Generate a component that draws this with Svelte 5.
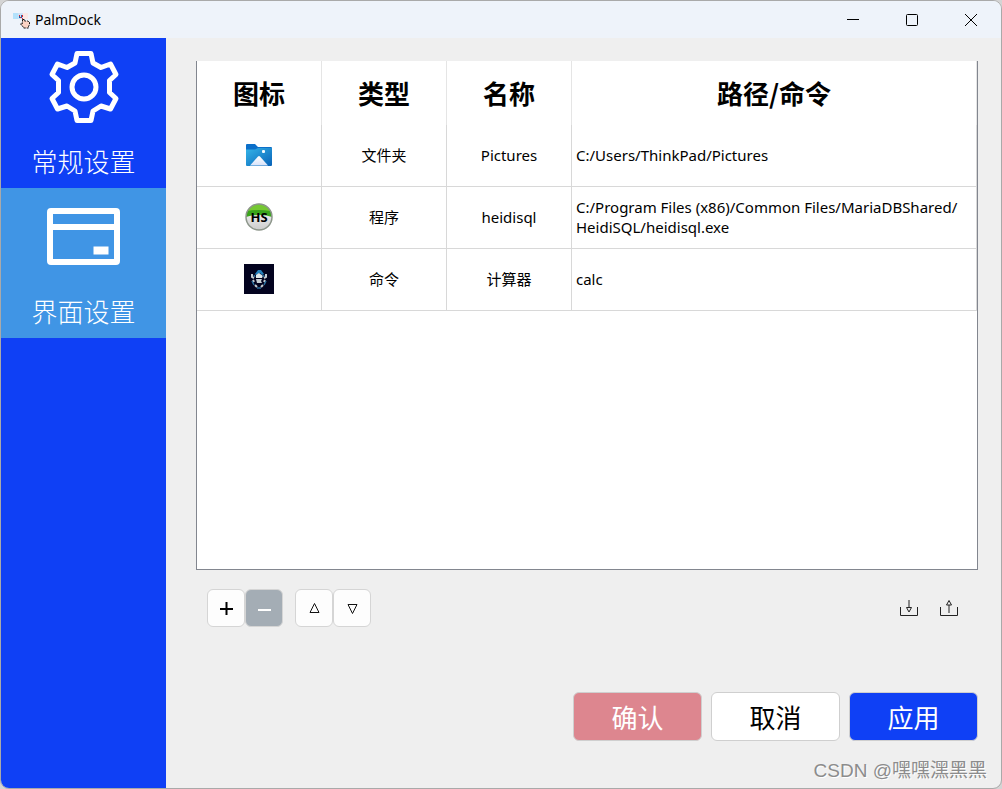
<script lang="ts">
  interface Entry {
    icon: 'pictures' | 'heidi' | 'command';
    type: string;
    name: string;
    path: string[];
  }

  const entries: Entry[] = [
    { icon: 'pictures', type: '文件夹', name: 'Pictures', path: ['C:/Users/ThinkPad/Pictures'] },
    {
      icon: 'heidi',
      type: '程序',
      name: 'heidisql',
      path: ['C:/Program Files (x86)/Common Files/MariaDBShared/', 'HeidiSQL/heidisql.exe']
    },
    { icon: 'command', type: '命令', name: '计算器', path: ['calc'] }
  ];

  let page = $state('interface');
</script>

<div class="window">
  <header class="titlebar">
    <svg class="titlebar__logo" width="18" height="18" viewBox="0 0 18 18" aria-hidden="true">
      <path d="M1 1h5v6H1z" fill="#b3e1fb" />
      <path d="M6 1h5v6H6z" fill="#cfe2f5" />
      <path d="M11 1h5v6h-5z" fill="#fae8e6" />
      <path d="M7 4h1v2H7zM9 3h1v3H9z" fill="#2360a8" />
      <path d="M7 3h1v1H7zM10 3h1v2h-1zM8 5h1v1H8zM10 6h1v1h-1z" fill="#e8232b" />
      <path d="M10.500 7.500v4l-1.500-.5v2l2.500 2v1h5v-2l1-1v-3l-2-1h-3v-1.500z" fill="#fbd3c4" stroke="#111" stroke-dasharray="2 1" />
    </svg>
    <span class="titlebar__title">PalmDock</span>
    <div class="titlebar__controls">
      <button type="button" aria-label="最小化">
        <svg width="14" height="14" viewBox="0 0 14 14"><path d="M1 6.500h12" /></svg>
      </button>
      <button type="button" aria-label="最大化">
        <svg width="14" height="14" viewBox="0 0 14 14"><rect x="1.500" y="1.500" width="11" height="11" rx="1" /></svg>
      </button>
      <button type="button" aria-label="关闭">
        <svg width="14" height="14" viewBox="0 0 14 14"><path d="M1 1l12 12M13 1L1 13" /></svg>
      </button>
    </div>
  </header>

  <div class="body">
    <nav class="sidebar">
      <button
        type="button"
        class="sidebar__item"
        class:sidebar__item--active={page === 'general'}
        onclick={() => (page = 'general')}
      >
        <svg width="74" height="74" viewBox="0 0 74 74" fill="none" stroke="#fff" stroke-width="5" stroke-linejoin="round">
          <path d="M30 3.500h14l2 9.500 8 4.500 9.500-3.500 5.500 10.500-6.500 6v12l6.500 6L63.500 59 54 56l-8 5-2 9.500H30L28 61l-8-5-9.500 3L5 48.500l6.500-6v-12l-6.500-6L10.500 14l9.500 3.500 8-4.500z" />
          <circle cx="37" cy="37" r="12" />
        </svg>
        <span>常规设置</span>
      </button>
      <button
        type="button"
        class="sidebar__item"
        class:sidebar__item--active={page === 'interface'}
        onclick={() => (page = 'interface')}
      >
        <svg width="74" height="74" viewBox="0 0 74 74" fill="none" stroke="#fff" stroke-width="6">
          <rect x="3" y="11" width="67" height="51" rx="1" />
          <path d="M3 27h67" />
          <path d="M46.500 50.500h15" stroke-width="8" />
        </svg>
        <span>界面设置</span>
      </button>
    </nav>

    <main class="content">
      <div class="panel">
        <table>
          <thead>
            <tr>
              <th class="narrow">图标</th>
              <th class="narrow">类型</th>
              <th class="narrow">名称</th>
              <th>路径/命令</th>
            </tr>
          </thead>
          <tbody>
            {#each entries as entry}
              <tr>
                <td>
                  {#if entry.icon === 'pictures'}
                    <svg width="30" height="30" viewBox="0 0 30 30" role="img" aria-label={entry.name}>
                      <defs>
                        <linearGradient id="folder" x1="0" y1="0" x2="1" y2="1">
                          <stop offset="0" stop-color="#35b5e8" />
                          <stop offset="1" stop-color="#0862b8" />
                        </linearGradient>
                        <linearGradient id="peak" x1="0" y1="0" x2="0" y2="1">
                          <stop offset="0" stop-color="#fff" />
                          <stop offset="1" stop-color="#d8e3fa" />
                        </linearGradient>
                      </defs>
                      <path d="M2 5q0-1 1-1h8l3 3h13q1 0 1 1v4H2z" fill="#0c6fc9" />
                      <path d="M2 9.500h9l3-1.500h14v17q0 1-1 1H3q-1 0-1-1z" fill="url(#folder)" />
                      <path d="M6 25.500l8-9q1-1 2 0l8 9z" fill="url(#peak)" />
                      <rect x="18" y="10" width="3" height="3" rx="1" fill="#eff9ff" />
                    </svg>
                  {:else if entry.icon === 'heidi'}
                    <svg width="30" height="30" viewBox="0 0 30 30" role="img" aria-label={entry.name}>
                      <defs>
                        <linearGradient id="silver" x1="0" y1="0" x2="0" y2="1">
                          <stop offset="0" stop-color="#fff" />
                          <stop offset="1" stop-color="#ccc" />
                        </linearGradient>
                      </defs>
                      <circle cx="15" cy="15" r="13" fill="url(#silver)" />
                      <path d="M2 15a13 13 0 0 1 26 0q-5-2-13-2T2 15z" fill="#3aa51b" />
                      <path d="M4 9a12 12 0 0 1 22 0q-11-2-22 0z" fill="#75c832" />
                      <circle cx="15" cy="15" r="13" fill="none" stroke="#8d968b" stroke-width="1.500" />
                      <text x="15" y="20" text-anchor="middle" class="badge">HS</text>
                    </svg>
                  {:else}
                    <svg width="30" height="30" viewBox="0 0 30 30" role="img" aria-label={entry.name}>
                      <path d="M0 0h30v30H0z" fill="#03031f" />
                      <path d="M11 10l3-4h3l3 4-2 1-2-2-4 2z" fill="#2380bd" />
                      <path d="M8 10v3l2 1M22 10v3l-2 1M9 16l1 2M21 16l-1 2M11 21l2 2M19 21l-2 2" fill="none" stroke="#c3cbd1" stroke-width="2" />
                      <path d="M12 11l3-2 4 3-1 2h-6z" fill="#dfe8ed" />
                      <path d="M12 15h6l-1 2 1 2h-5z" fill="#c6cdd3" />
                      <path d="M10 11l1 2M20 11l-1 2M8 17l2 4M22 17l-2 4M13 24h4" fill="none" stroke="#2b6f9f" stroke-width="1.500" />
                    </svg>
                  {/if}
                </td>
                <td>{entry.type}</td>
                <td>{entry.name}</td>
                <td class="path">
                  {#each entry.path as part}{part}<wbr />{/each}
                </td>
              </tr>
            {/each}
          </tbody>
        </table>
      </div>

      <div class="toolbar">
        <div class="toolbar__group">
          <button type="button" class="tool" aria-label="添加">
            <svg width="15" height="15" viewBox="0 0 15 15"><path d="M7.500 1v13M1 8h13" stroke="#000" stroke-width="2" /></svg>
          </button>
          <button type="button" class="tool tool--muted" aria-label="删除">
            <svg width="15" height="15" viewBox="0 0 15 15"><path d="M1 9h13" stroke="#fff" stroke-width="2" /></svg>
          </button>
        </div>
        <div class="toolbar__group">
          <button type="button" class="tool" aria-label="上移">
            <svg width="13" height="13" viewBox="0 0 13 13"><path d="M6.500 1.500l4.500 9h-9z" fill="none" stroke="#111" /></svg>
          </button>
          <button type="button" class="tool" aria-label="下移">
            <svg width="13" height="13" viewBox="0 0 13 13"><path d="M6.500 11.500L2 2.500h9z" fill="none" stroke="#111" /></svg>
          </button>
        </div>
        <div class="toolbar__io">
          <button type="button" aria-label="导入">
            <svg width="18" height="18" viewBox="0 0 18 18">
              <path d="M.5 8v8.500h17V8M9 1v8M6.500 8.500h5L9 13z" />
            </svg>
          </button>
          <button type="button" aria-label="导出">
            <svg width="18" height="18" viewBox="0 0 18 18">
              <path d="M.5 8v8.500h17V8M9 14V6M6.500 6h5L9 1.500z" />
            </svg>
          </button>
        </div>
      </div>

      <footer class="actions">
        <button type="button" class="action action--confirm">确认</button>
        <button type="button" class="action">取消</button>
        <button type="button" class="action action--apply">应用</button>
      </footer>
    </main>
  </div>

  <span class="watermark">CSDN @嘿嘿潶黑黑</span>
</div>

<style>
  :global(body) {
    background: #d4d4d4;
  }

  button {
    margin: 0;
    padding: 0;
    border: 0;
    background: none;
    font: inherit;
    color: inherit;
    cursor: pointer;
  }

  svg {
    display: block;
  }

  .window {
    position: relative;
    display: flex;
    flex-direction: column;
    box-sizing: border-box;
    min-height: 100vh;
    border: 1px solid #a9a9a9;
    border-radius: 9px;
    overflow: hidden;
    background: #efefef;
    color: #000;
    font-family: 'Noto Sans', 'Noto Sans CJK SC', sans-serif;
    font-size: 14px;
  }

  /* Title bar */
  .titlebar {
    display: flex;
    align-items: center;
    height: 37px;
    padding-left: 11px;
    background: #eef3fa;
  }

  .titlebar__logo {
    margin-top: 2px;
  }

  .titlebar__title {
    margin-left: 5px;
  }

  .titlebar__controls {
    display: flex;
    align-self: stretch;
    margin-left: auto;
    padding-right: 1px;
  }

  .titlebar__controls button {
    display: flex;
    align-items: center;
    justify-content: center;
    width: 59px;
  }

  .titlebar__controls svg {
    fill: none;
    stroke: #000;
  }

  .body {
    display: flex;
    flex: 1;
  }

  /* Sidebar */
  .sidebar {
    flex: none;
    width: 165px;
    background: #0f40f5;
  }

  .sidebar__item {
    display: flex;
    flex-direction: column;
    align-items: center;
    gap: 17px;
    box-sizing: border-box;
    width: 100%;
    height: 150px;
    padding-top: 12px;
    color: #fff;
    font-family: 'Noto Sans CJK SC', sans-serif;
    font-size: 26px;
    font-weight: 300;
    line-height: 40px;
  }

  .sidebar__item--active {
    background: #4095e5;
  }

  /* Content */
  .content {
    display: flex;
    flex: 1;
    flex-direction: column;
    min-width: 0;
    padding: 23px 23px 47px 30px;
  }

  .panel {
    flex: 1;
    border: 1px solid #82868f;
    border-top: 0;
    background: #fff;
  }

  table {
    width: 100%;
    border-collapse: separate;
    border-spacing: 0;
    table-layout: fixed;
    font-size: 15px;
  }

  th,
  td {
    box-sizing: border-box;
    padding: 0 4px;
    border-right: 1px solid #d8d8d8;
    text-align: center;
    line-height: 20px;
  }

  th {
    height: 64px;
    border-right-color: #e5e5e5;
    font-family: 'Noto Sans CJK SC', sans-serif;
    font-size: 26px;
  }

  .narrow {
    width: 125px;
  }

  td {
    height: 62px;
    padding-bottom: 2px;
    border-bottom: 1px solid #d8d8d8;
  }

  td svg {
    margin: 0 auto;
  }

  .path {
    text-align: left;
  }

  .badge {
    font: bold 13px 'Open Sans', sans-serif;
  }

  /* Toolbar */
  .toolbar {
    display: flex;
    align-items: center;
    gap: 12px;
    margin-top: 19px;
    padding: 0 20px 0 11px;
  }

  .toolbar__group {
    display: flex;
  }

  .tool {
    display: flex;
    align-items: center;
    justify-content: center;
    box-sizing: border-box;
    width: 38px;
    height: 38px;
    border: 1px solid #d5d5d5;
    border-radius: 6px;
    background: #fdfdfd;
  }

  .tool--muted {
    background: #a4adb5;
  }

  .toolbar__io {
    display: flex;
    gap: 22px;
    margin-left: auto;
  }

  .toolbar__io svg {
    fill: none;
    stroke: #222;
  }

  /* Bottom actions */
  .actions {
    display: flex;
    justify-content: flex-end;
    gap: 9px;
    margin-top: 65px;
  }

  .action {
    box-sizing: border-box;
    width: 129px;
    height: 49px;
    border: 1px solid #cfcfcf;
    border-radius: 6px;
    background: #fff;
    font-family: 'Noto Sans CJK SC', sans-serif;
    font-size: 26px;
    line-height: 47px;
  }

  .action--confirm {
    background: #dd868f;
    color: #fff;
  }

  .action--apply {
    background: #0f40f5;
    color: #fff;
  }

  .watermark {
    position: absolute;
    right: 14px;
    bottom: 3px;
    color: #8c8c8c;
    font-family: 'Liberation Sans', 'Noto Sans CJK SC', sans-serif;
    font-size: 19px;
    line-height: 28px;
    text-shadow: 1px 1px 0 #fff;
  }
</style>
